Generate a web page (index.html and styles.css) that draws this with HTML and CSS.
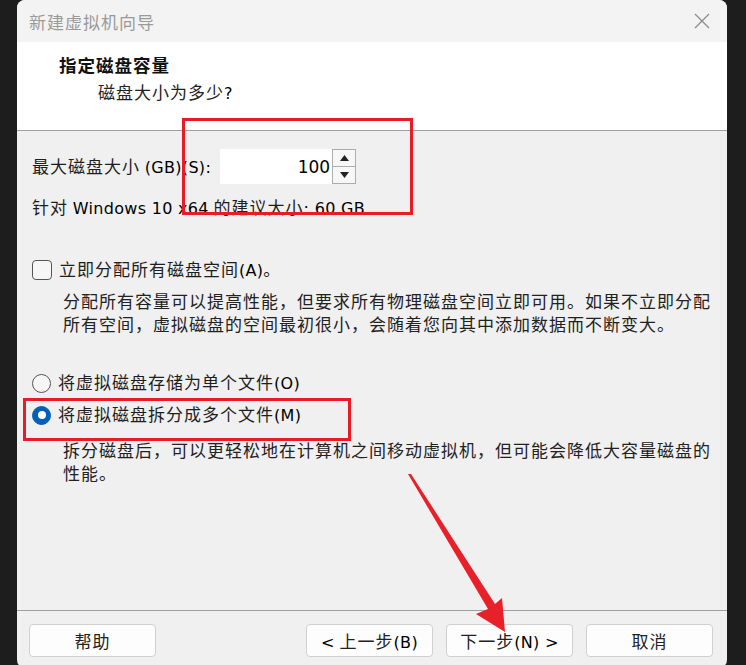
FILE: index.html
```html
<!DOCTYPE html>
<html lang="zh-CN">
<head>
<meta charset="utf-8">
<title>新建虚拟机向导</title>
<link rel="stylesheet" href="styles.css">
</head>
<body>
<div class="window">
  <div class="titlebar">
    <span class="title">新建虚拟机向导</span>
    <svg class="close" width="16" height="16" viewBox="0 0 16 16"><path d="M1 1 L15 15 M15 1 L1 15" stroke="#8c8c8c" stroke-width="1.3" fill="none"/></svg>
  </div>
  <div class="header">
    <div class="h-title">指定磁盘容量</div>
    <div class="h-sub">磁盘大小为多少<span class="en">?</span></div>
  </div>
  <div class="content">
    <div class="size-row">
      <span class="zh">最大磁盘大小 <span class="en">(GB)(S):</span></span>
      <div class="spin">
        <div class="spin-input"><span class="en">100</span></div>
        <div class="spin-btns">
          <div class="spin-btn"><svg width="9" height="6" viewBox="0 0 9 6"><path d="M4.5 0 L9 6 L0 6 Z" fill="#222"/></svg></div>
          <div class="spin-btn"><svg width="9" height="6" viewBox="0 0 9 6"><path d="M0 0 L9 0 L4.5 6 Z" fill="#222"/></svg></div>
        </div>
      </div>
    </div>
    <div class="rec zh">针对 <span class="en">Windows 10 x64</span> 的建议大小<span class="en">: 60 GB</span></div>

    <div class="check-row">
      <span class="checkbox"></span>
      <span class="zh">立即分配所有磁盘空间<span class="en">(A)</span>。</span>
    </div>
    <div class="desc zh">分配所有容量可以提高性能，但要求所有物理磁盘空间立即可用。如果不立即分配所有空间，虚拟磁盘的空间最初很小，会随着您向其中添加数据而不断变大。</div>

    <div class="radio-row first">
      <span class="radio"></span>
      <span class="zh">将虚拟磁盘存储为单个文件<span class="en">(O)</span></span>
    </div>
    <div class="radio-row">
      <span class="radio on"></span>
      <span class="zh">将虚拟磁盘拆分成多个文件<span class="en">(M)</span></span>
    </div>
    <div class="desc desc2 zh">拆分磁盘后，可以更轻松地在计算机之间移动虚拟机，但可能会降低大容量磁盘的性能。</div>
  </div>
  <div class="footer">
    <button class="btn"><span class="zh">帮助</span></button>
    <div class="spacer"></div>
    <button class="btn"><span class="zh"><span class="en">&lt;</span> 上一步<span class="en">(B)</span></span></button>
    <button class="btn"><span class="zh">下一步<span class="en">(N) &gt;</span></span></button>
    <button class="btn"><span class="zh">取消</span></button>
  </div>
</div>

<div class="mark mark1"></div>
<div class="mark mark2"></div>
<svg class="arrow" width="746" height="665" viewBox="0 0 746 665">
  <polygon points="408,474 411,474 495,604 502,598 505,632 476,614 488,609" fill="#e8202a"/>
</svg>
</body>
</html>
```
FILE: styles.css
```css
* { box-sizing: border-box; }
html, body { margin: 0; padding: 0; }
body {
  width: 746px;
  height: 665px;
  background: #1d1d1d;
  overflow: hidden;
  position: relative;
  font-family: "Noto Sans CJK SC", sans-serif;
  color: #1e1e1e;
}
.window {
  margin-left: 17px;
  width: 710px;
  height: 668px;
  background: #f0f0f0;
  border-radius: 8px;
  overflow: hidden;
  display: flex;
  flex-direction: column;
}
.titlebar {
  height: 42px;
  background: #f3f3f3;
  display: flex;
  align-items: center;
  justify-content: space-between;
  padding: 0 17px 0 12px;
}
.title {
  font-size: 17px;
  letter-spacing: 1px;
  color: #9a9a9a;
}
.header {
  height: 89px;
  background: #ffffff;
  border-bottom: 1px solid #a0a0a0;
  padding: 11px 0 0 42px;
}
.h-title {
  font-size: 17.5px;
  font-weight: 700;
  letter-spacing: 1px;
  line-height: 24px;
  color: #111;
}
.h-sub {
  font-size: 17px;
  letter-spacing: 1px;
  line-height: 24px;
  margin-top: 3px;
  padding-left: 39px;
  color: #222;
}
.zh {
  font-size: 17px;
  letter-spacing: 1px;
}
.en {
  font-family: "DejaVu Sans", sans-serif;
  font-size: 16px;
  letter-spacing: 0.3px;
  color: #000;
}
.content {
  flex: 1;
  padding: 18px 0 0 15px;
}
.size-row {
  display: flex;
  align-items: center;
  height: 35px;
  line-height: 24px;
}
.spin {
  display: flex;
  margin-left: 9px;
  height: 35px;
}
.spin-input {
  width: 112px;
  background: #fff;
  display: flex;
  align-items: center;
  justify-content: flex-end;
  padding-right: 2px;
}
.spin-input .en { font-size: 17px; letter-spacing: 0; }
.spin-btns {
  width: 24px;
  display: flex;
  flex-direction: column;
  border: 1px solid #adadad;
  background: #f7f7f7;
}
.spin-btn {
  flex: 1;
  display: flex;
  align-items: center;
  justify-content: center;
}
.spin-btn + .spin-btn { border-top: 1px solid #adadad; }
.rec {
  margin-top: 11px;
  line-height: 24px;
}
.check-row, .radio-row {
  display: flex;
  align-items: center;
  height: 24px;
  line-height: 24px;
}
.check-row { margin-top: 37px; }
.checkbox {
  width: 20px;
  height: 20px;
  border: 1px solid #555;
  border-radius: 4px;
  background: #f6f6f6;
  margin-right: 7px;
}
.desc {
  margin-top: 7px;
  padding-left: 31px;
  padding-right: 14px;
  line-height: 23px;
  color: #222;
}
.radio-row.first { margin-top: 36px; }
.radio-row + .radio-row { margin-top: 8px; }
.radio {
  width: 19px;
  height: 19px;
  border: 1px solid #555;
  border-radius: 50%;
  background: #f6f6f6;
  margin-right: 7px;
  display: flex;
  align-items: center;
  justify-content: center;
}
.radio.on {
  background: #005fb8;
  border-color: #005fb8;
}
.radio.on::after {
  content: "";
  width: 8px;
  height: 8px;
  border-radius: 50%;
  background: #fff;
}
.desc2 { margin-top: 11px; }
.footer {
  height: 58px;
  border-top: 1px solid #a0a0a0;
  display: flex;
  align-items: flex-start;
  padding: 13px 14px 0 12px;
  gap: 13px;
}
.spacer { flex: 1; }
.btn {
  width: 127px;
  height: 33px;
  background: #fdfdfd;
  border: 1px solid #d0d0d0;
  border-radius: 4px;
  font-family: "Noto Sans CJK SC", sans-serif;
  color: #222;
  padding: 0;
  display: flex;
  align-items: center;
  justify-content: center;
}
.btn .zh { color: #222; }
.mark {
  position: absolute;
  border: 3px solid #e81c24;
}
.mark1 { left: 182px; top: 118px; width: 231px; height: 97px; }
.mark2 { left: 23px; top: 398px; width: 328px; height: 43px; }
.arrow { position: absolute; left: 0; top: 0; pointer-events: none; }
```
